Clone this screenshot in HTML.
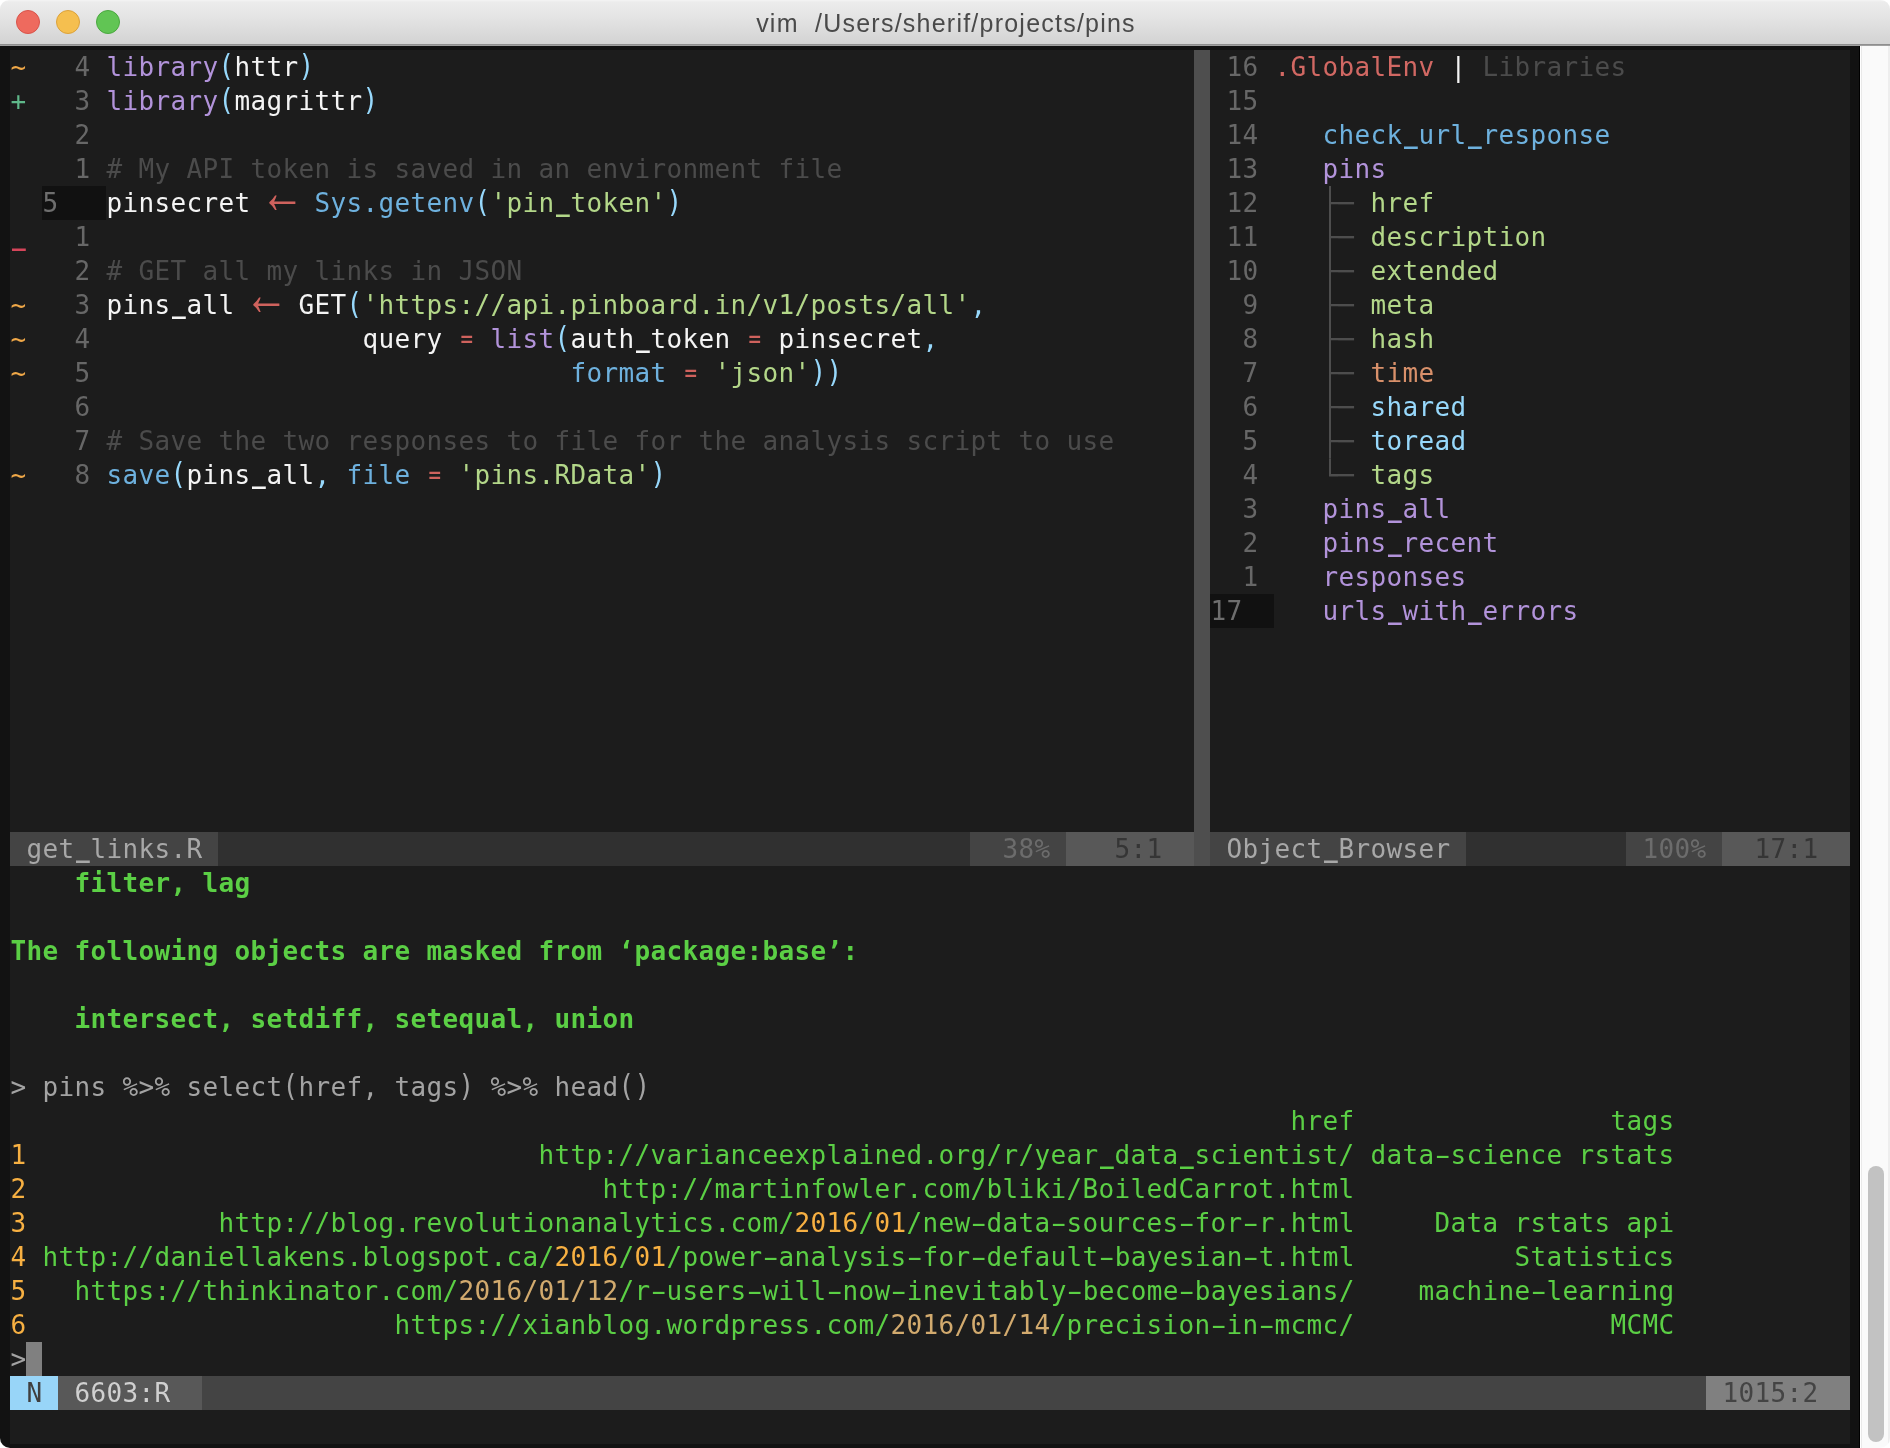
<!DOCTYPE html>
<html lang="en"><head><meta charset="utf-8"><title>vim /Users/sherif/projects/pins</title>
<style>
html,body{margin:0;padding:0;background:#fff;}
body{width:1890px;height:1448px;overflow:hidden;position:relative;}
#win{position:absolute;left:0;top:0;width:1890px;height:1448px;}
#titlebar{position:absolute;left:0;top:0;width:1890px;height:46px;border-radius:9px 9px 0 0;background:linear-gradient(#f4f4f4 0px,#ececec 2px,#e6e6e6 14px,#d3d3d3 44px,#d3d3d3 46px);}
#tbline{position:absolute;left:0;top:44px;width:1890px;height:2px;background:linear-gradient(#8e8e8e 0,#8e8e8e 50%,#a0a0a0 50%,#a0a0a0 100%);}
#title{will-change:transform;position:absolute;left:1px;top:1px;width:1890px;height:44px;line-height:44px;text-align:center;font-family:"Liberation Sans",sans-serif;font-size:25px;letter-spacing:1.23px;color:#4a4a4a;white-space:pre;}
.tl{position:absolute;top:9.8px;width:24.4px;height:24.4px;border-radius:50%;box-sizing:border-box;}
#term{position:absolute;left:0;top:46px;width:1860px;height:1402px;background:#121212;border-radius:0 0 0 10px;}
#inner{position:absolute;left:10px;top:4px;width:1840px;height:1394px;background:#1c1c1c;}
#edge{position:absolute;left:1859px;top:46px;width:1px;height:1402px;background:#000;}
#track{position:absolute;left:1860px;top:46px;width:30px;height:1402px;background:linear-gradient(90deg,#ffffff 0,#ffffff 1px,#e9e9e9 1px,#e9e9e9 2px,#fafafa 2px,#fafafa 28px,#eeeeee 28px,#eeeeee 30px);border-radius:0 0 10px 0;}
#thumb{position:absolute;left:1868px;top:1166px;width:16px;height:276px;border-radius:8px;background:#c2c2c2;}
#grid{will-change:transform;position:absolute;left:10px;top:50px;width:1840px;height:1394px;font-family:"DejaVu Sans Mono", "Liberation Mono", monospace;font-size:26.0px;letter-spacing:0.3467px;line-height:34px;white-space:pre;font-variant-ligatures:none;font-kerning:none;}
#grid i{position:absolute;display:block;height:34px;font-style:normal;}
#grid b{position:absolute;display:block;height:34px;line-height:34px;font-weight:normal;margin-left:0.5px;}
#grid b.bd{font-weight:bold;}
#grid b.tr{margin-left:0;transform:scaleY(1.1);}
#grid b.ar{margin-left:0;font-family:"Liberation Mono",monospace;font-size:44px;letter-spacing:0;transform-origin:0 0;transform:translate(3.2px,-13.2px) scaleY(1.4);}
#grid q{quotes:none;display:inline-block;transform-origin:50% 80%;transform:scaleY(1.13);}
#grid q:before,#grid q:after{content:none;}
#grid em{font-style:normal;display:inline-block;transform:scaleX(0.8);}
#grid s{text-decoration:none;display:inline-block;transform:translateY(-0.4px) scaleX(1.75);}
#grid u{text-decoration:none;display:inline-block;font-weight:bold;transform:translateY(-1.4px) scaleX(0.88);}

</style></head><body>
<div id="win">
<div id="titlebar"></div><div id="tbline"></div>
<div class="tl" style="left:15.8px;background:#ee6a5e;border:1px solid #d9534a"></div>
<div class="tl" style="left:55.8px;background:#f5bf4f;border:1px solid #dca23a"></div>
<div class="tl" style="left:95.8px;background:#61c554;border:1px solid #4aa83f"></div>
<div id="title">vim  /Users/sherif/projects/pins</div>
<div id="term"><div id="inner"></div></div>
<div id="edge"></div><div id="track"></div><div id="thumb"></div>
<div id="grid">
<i style="left:32px;top:136px;width:64px;background:#111111"></i>
<i style="left:1200px;top:544px;width:64px;background:#111111"></i>
<i style="left:1184px;top:0px;width:16px;background:#4e4e4e"></i>
<i style="left:1184px;top:34px;width:16px;background:#4e4e4e"></i>
<i style="left:1184px;top:68px;width:16px;background:#4e4e4e"></i>
<i style="left:1184px;top:102px;width:16px;background:#4e4e4e"></i>
<i style="left:1184px;top:136px;width:16px;background:#4e4e4e"></i>
<i style="left:1184px;top:170px;width:16px;background:#4e4e4e"></i>
<i style="left:1184px;top:204px;width:16px;background:#4e4e4e"></i>
<i style="left:1184px;top:238px;width:16px;background:#4e4e4e"></i>
<i style="left:1184px;top:272px;width:16px;background:#4e4e4e"></i>
<i style="left:1184px;top:306px;width:16px;background:#4e4e4e"></i>
<i style="left:1184px;top:340px;width:16px;background:#4e4e4e"></i>
<i style="left:1184px;top:374px;width:16px;background:#4e4e4e"></i>
<i style="left:1184px;top:408px;width:16px;background:#4e4e4e"></i>
<i style="left:1184px;top:442px;width:16px;background:#4e4e4e"></i>
<i style="left:1184px;top:476px;width:16px;background:#4e4e4e"></i>
<i style="left:1184px;top:510px;width:16px;background:#4e4e4e"></i>
<i style="left:1184px;top:544px;width:16px;background:#4e4e4e"></i>
<i style="left:1184px;top:578px;width:16px;background:#4e4e4e"></i>
<i style="left:1184px;top:612px;width:16px;background:#4e4e4e"></i>
<i style="left:1184px;top:646px;width:16px;background:#4e4e4e"></i>
<i style="left:1184px;top:680px;width:16px;background:#4e4e4e"></i>
<i style="left:1184px;top:714px;width:16px;background:#4e4e4e"></i>
<i style="left:1184px;top:748px;width:16px;background:#4e4e4e"></i>
<i style="left:1184px;top:782px;width:16px;background:#4e4e4e"></i>
<i style="left:0px;top:782px;width:208px;background:#444444"></i>
<i style="left:208px;top:782px;width:752px;background:#303030"></i>
<i style="left:960px;top:782px;width:96px;background:#444444"></i>
<i style="left:1056px;top:782px;width:128px;background:#585858"></i>
<i style="left:1200px;top:782px;width:256px;background:#444444"></i>
<i style="left:1456px;top:782px;width:160px;background:#303030"></i>
<i style="left:1616px;top:782px;width:96px;background:#444444"></i>
<i style="left:1712px;top:782px;width:128px;background:#585858"></i>
<i style="left:16px;top:1292px;width:16px;background:#808080"></i>
<i style="left:0px;top:1326px;width:48px;background:#98d5f8"></i>
<i style="left:48px;top:1326px;width:144px;background:#585858"></i>
<i style="left:192px;top:1326px;width:1504px;background:#444444"></i>
<i style="left:1696px;top:1326px;width:144px;background:#808080"></i>
<b class="ar" style="left:256px;top:136px;color:#cf625d">←</b>
<b class="ar" style="left:240px;top:238px;color:#cf625d">←</b>
<b class="tr" style="left:1312px;top:136px;color:#4d4d4d">├─</b>
<b class="tr" style="left:1312px;top:170px;color:#4d4d4d">├─</b>
<b class="tr" style="left:1312px;top:204px;color:#4d4d4d">├─</b>
<b class="tr" style="left:1312px;top:238px;color:#4d4d4d">├─</b>
<b class="tr" style="left:1312px;top:272px;color:#4d4d4d">├─</b>
<b class="tr" style="left:1312px;top:306px;color:#4d4d4d">├─</b>
<b class="tr" style="left:1312px;top:340px;color:#4d4d4d">├─</b>
<b class="tr" style="left:1312px;top:374px;color:#4d4d4d">├─</b>
<b class="tr" style="left:1312px;top:408px;color:#4d4d4d">└─</b>
<b style="left:0px;top:0px;color:#f0a848">~</b>
<b style="left:64px;top:0px;color:#676767">4</b>
<b style="left:96px;top:0px;color:#b293da">library</b>
<b style="left:208px;top:0px;color:#97d8fb"><q>(</q></b>
<b style="left:224px;top:0px;color:#f4f4f4">httr</b>
<b style="left:288px;top:0px;color:#97d8fb"><q>)</q></b>
<b style="left:0px;top:34px;color:#5fb88a">+</b>
<b style="left:64px;top:34px;color:#676767">3</b>
<b style="left:96px;top:34px;color:#b293da">library</b>
<b style="left:208px;top:34px;color:#97d8fb"><q>(</q></b>
<b style="left:224px;top:34px;color:#f4f4f4">magrittr</b>
<b style="left:352px;top:34px;color:#97d8fb"><q>)</q></b>
<b style="left:64px;top:68px;color:#676767">2</b>
<b style="left:64px;top:102px;color:#676767">1</b>
<b style="left:96px;top:102px;color:#4b4b4b"># My API token is saved in an environment file</b>
<b style="left:32px;top:136px;color:#6e6e6e">5</b>
<b style="left:96px;top:136px;color:#f4f4f4">pinsecret</b>
<b style="left:304px;top:136px;color:#6eb1de">Sys.getenv</b>
<b style="left:464px;top:136px;color:#97d8fb"><q>(</q></b>
<b style="left:480px;top:136px;color:#b3d789">&#x27;pin<u>_</u>token&#x27;</b>
<b style="left:656px;top:136px;color:#97d8fb"><q>)</q></b>
<b style="left:0px;top:170px;color:#d5455a"><u>_</u></b>
<b style="left:64px;top:170px;color:#676767">1</b>
<b style="left:64px;top:204px;color:#676767">2</b>
<b style="left:96px;top:204px;color:#4b4b4b"># GET all my links in JSON</b>
<b style="left:0px;top:238px;color:#f0a848">~</b>
<b style="left:64px;top:238px;color:#676767">3</b>
<b style="left:96px;top:238px;color:#f4f4f4">pins<u>_</u>all</b>
<b style="left:288px;top:238px;color:#f4f4f4">GET</b>
<b style="left:336px;top:238px;color:#97d8fb"><q>(</q></b>
<b style="left:352px;top:238px;color:#b3d789">&#x27;https://api.pinboard.in/v1/posts/all&#x27;</b>
<b style="left:960px;top:238px;color:#97d8fb">,</b>
<b style="left:0px;top:272px;color:#f0a848">~</b>
<b style="left:64px;top:272px;color:#676767">4</b>
<b style="left:352px;top:272px;color:#f4f4f4">query</b>
<b style="left:448px;top:272px;color:#cf625d"><em>=</em></b>
<b style="left:480px;top:272px;color:#b293da">list</b>
<b style="left:544px;top:272px;color:#97d8fb"><q>(</q></b>
<b style="left:560px;top:272px;color:#f4f4f4">auth<u>_</u>token</b>
<b style="left:736px;top:272px;color:#cf625d"><em>=</em></b>
<b style="left:768px;top:272px;color:#f4f4f4">pinsecret</b>
<b style="left:912px;top:272px;color:#97d8fb">,</b>
<b style="left:0px;top:306px;color:#f0a848">~</b>
<b style="left:64px;top:306px;color:#676767">5</b>
<b style="left:560px;top:306px;color:#6eb1de">format</b>
<b style="left:672px;top:306px;color:#cf625d"><em>=</em></b>
<b style="left:704px;top:306px;color:#b3d789">&#x27;json&#x27;</b>
<b style="left:800px;top:306px;color:#97d8fb"><q>)</q><q>)</q></b>
<b style="left:64px;top:340px;color:#676767">6</b>
<b style="left:64px;top:374px;color:#676767">7</b>
<b style="left:96px;top:374px;color:#4b4b4b"># Save the two responses to file for the analysis script to use</b>
<b style="left:0px;top:408px;color:#f0a848">~</b>
<b style="left:64px;top:408px;color:#676767">8</b>
<b style="left:96px;top:408px;color:#6eb1de">save</b>
<b style="left:160px;top:408px;color:#97d8fb"><q>(</q></b>
<b style="left:176px;top:408px;color:#f4f4f4">pins<u>_</u>all</b>
<b style="left:304px;top:408px;color:#97d8fb">,</b>
<b style="left:336px;top:408px;color:#6eb1de">file</b>
<b style="left:416px;top:408px;color:#cf625d"><em>=</em></b>
<b style="left:448px;top:408px;color:#b3d789">&#x27;pins.RData&#x27;</b>
<b style="left:640px;top:408px;color:#97d8fb"><q>)</q></b>
<b style="left:1216px;top:0px;color:#676767">16</b>
<b style="left:1264px;top:0px;color:#d16863">.GlobalEnv</b>
<b style="left:1440px;top:0px;color:#f4f4f4">|</b>
<b style="left:1472px;top:0px;color:#4b4b4b">Libraries</b>
<b style="left:1216px;top:34px;color:#676767">15</b>
<b style="left:1216px;top:68px;color:#676767">14</b>
<b style="left:1312px;top:68px;color:#6eb1de">check<u>_</u>url<u>_</u>response</b>
<b style="left:1216px;top:102px;color:#676767">13</b>
<b style="left:1312px;top:102px;color:#b293da">pins</b>
<b style="left:1216px;top:136px;color:#676767">12</b>
<b style="left:1360px;top:136px;color:#b3d789">href</b>
<b style="left:1216px;top:170px;color:#676767">11</b>
<b style="left:1360px;top:170px;color:#b3d789">description</b>
<b style="left:1216px;top:204px;color:#676767">10</b>
<b style="left:1360px;top:204px;color:#b3d789">extended</b>
<b style="left:1232px;top:238px;color:#676767">9</b>
<b style="left:1360px;top:238px;color:#b3d789">meta</b>
<b style="left:1232px;top:272px;color:#676767">8</b>
<b style="left:1360px;top:272px;color:#b3d789">hash</b>
<b style="left:1232px;top:306px;color:#676767">7</b>
<b style="left:1360px;top:306px;color:#d8906a">time</b>
<b style="left:1232px;top:340px;color:#676767">6</b>
<b style="left:1360px;top:340px;color:#97d8fb">shared</b>
<b style="left:1232px;top:374px;color:#676767">5</b>
<b style="left:1360px;top:374px;color:#97d8fb">toread</b>
<b style="left:1232px;top:408px;color:#676767">4</b>
<b style="left:1360px;top:408px;color:#b3d789">tags</b>
<b style="left:1232px;top:442px;color:#676767">3</b>
<b style="left:1312px;top:442px;color:#b293da">pins<u>_</u>all</b>
<b style="left:1232px;top:476px;color:#676767">2</b>
<b style="left:1312px;top:476px;color:#b293da">pins<u>_</u>recent</b>
<b style="left:1232px;top:510px;color:#676767">1</b>
<b style="left:1312px;top:510px;color:#b293da">responses</b>
<b style="left:1200px;top:544px;color:#6e6e6e">17</b>
<b style="left:1312px;top:544px;color:#b293da">urls<u>_</u>with<u>_</u>errors</b>
<b style="left:16px;top:782px;color:#a8a8a8">get<u>_</u>links.R</b>
<b style="left:992px;top:782px;color:#6c6c6c">38%</b>
<b style="left:1104px;top:782px;color:#353535">5:1</b>
<b style="left:1216px;top:782px;color:#a8a8a8">Object<u>_</u>Browser</b>
<b style="left:1632px;top:782px;color:#6c6c6c">100%</b>
<b style="left:1744px;top:782px;color:#353535">17:1</b>
<b class="bd" style="left:64px;top:816px;color:#5bcf45">filter, lag</b>
<b class="bd" style="left:0px;top:884px;color:#5bcf45">The following objects are masked from ‘package:base’:</b>
<b class="bd" style="left:64px;top:952px;color:#5bcf45">intersect, setdiff, setequal, union</b>
<b style="left:0px;top:1020px;color:#a3a3a3">&gt; pins %&gt;% select<q>(</q>href, tags<q>)</q> %&gt;% head<q>(</q><q>)</q></b>
<b style="left:1280px;top:1054px;color:#5bcf45">href</b>
<b style="left:1600px;top:1054px;color:#5bcf45">tags</b>
<b style="left:0px;top:1088px;color:#f7b042">1</b>
<b style="left:528px;top:1088px;color:#5bcf45">http://varianceexplained.org/r/year<u>_</u>data<u>_</u>scientist/</b>
<b style="left:1360px;top:1088px;color:#5bcf45">data<s>-</s>science rstats</b>
<b style="left:0px;top:1122px;color:#f7b042">2</b>
<b style="left:592px;top:1122px;color:#5bcf45">http://martinfowler.com/bliki/BoiledCarrot.html</b>
<b style="left:0px;top:1156px;color:#f7b042">3</b>
<b style="left:208px;top:1156px;color:#5bcf45">http://blog.revolutionanalytics.com/</b>
<b style="left:784px;top:1156px;color:#f7b042">2016</b>
<b style="left:848px;top:1156px;color:#5bcf45">/</b>
<b style="left:864px;top:1156px;color:#f7b042">01</b>
<b style="left:896px;top:1156px;color:#5bcf45">/new<s>-</s>data<s>-</s>sources<s>-</s>for<s>-</s>r.html</b>
<b style="left:1424px;top:1156px;color:#5bcf45">Data rstats api</b>
<b style="left:0px;top:1190px;color:#f7b042">4</b>
<b style="left:32px;top:1190px;color:#5bcf45">http://daniellakens.blogspot.ca/</b>
<b style="left:544px;top:1190px;color:#f7b042">2016</b>
<b style="left:608px;top:1190px;color:#5bcf45">/</b>
<b style="left:624px;top:1190px;color:#f7b042">01</b>
<b style="left:656px;top:1190px;color:#5bcf45">/power<s>-</s>analysis<s>-</s>for<s>-</s>default<s>-</s>bayesian<s>-</s>t.html</b>
<b style="left:1504px;top:1190px;color:#5bcf45">Statistics</b>
<b style="left:0px;top:1224px;color:#f7b042">5</b>
<b style="left:64px;top:1224px;color:#5bcf45">https://thinkinator.com/</b>
<b style="left:448px;top:1224px;color:#d2aa6e">2016/01/12</b>
<b style="left:608px;top:1224px;color:#5bcf45">/r<s>-</s>users<s>-</s>will<s>-</s>now<s>-</s>inevitably<s>-</s>become<s>-</s>bayesians/</b>
<b style="left:1408px;top:1224px;color:#5bcf45">machine<s>-</s>learning</b>
<b style="left:0px;top:1258px;color:#f7b042">6</b>
<b style="left:384px;top:1258px;color:#5bcf45">https://xianblog.wordpress.com/</b>
<b style="left:880px;top:1258px;color:#d2aa6e">2016/01/14</b>
<b style="left:1040px;top:1258px;color:#5bcf45">/precision<s>-</s>in<s>-</s>mcmc/</b>
<b style="left:1600px;top:1258px;color:#5bcf45">MCMC</b>
<b style="left:0px;top:1292px;color:#a3a3a3">&gt;</b>
<b style="left:16px;top:1326px;color:#3f3f3f">N</b>
<b style="left:64px;top:1326px;color:#d0d0d0">6603:R</b>
<b style="left:1712px;top:1326px;color:#444444">1015:2</b>
</div>
</div>
</body></html>
